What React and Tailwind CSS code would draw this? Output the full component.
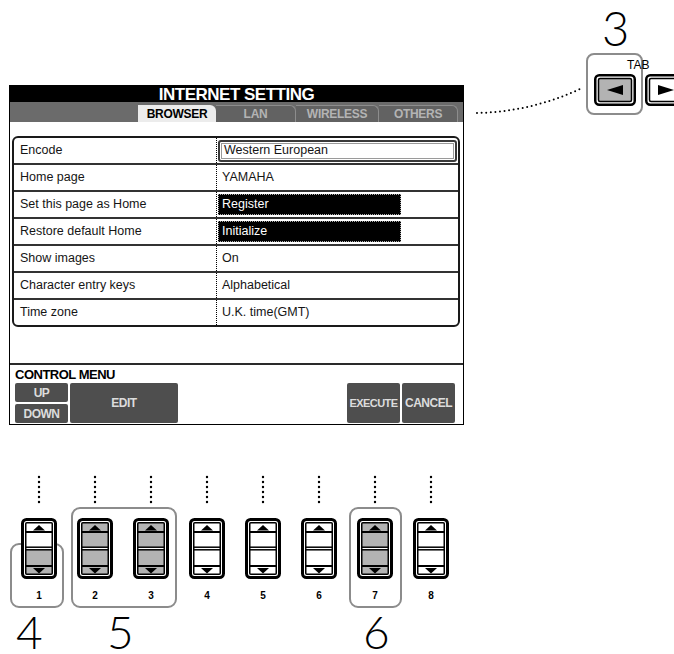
import React from 'react';

const rows = [
  { label: 'Encode', value: 'Western European', kind: 'field' },
  { label: 'Home page', value: 'YAMAHA' },
  { label: 'Set this page as Home', value: 'Register', kind: 'button' },
  { label: 'Restore default Home', value: 'Initialize', kind: 'button' },
  { label: 'Show images', value: 'On' },
  { label: 'Character entry keys', value: 'Alphabetical' },
  { label: 'Time zone', value: 'U.K. time(GMT)' },
];

const tabs = [
  { name: 'BROWSER', w: 'w-[78px]', active: true },
  { name: 'LAN', w: 'w-[80px]' },
  { name: 'WIRELESS', w: 'w-[83px]' },
  { name: 'OTHERS', w: 'w-[79px]' },
];

// 'none' = all white, 'lower' = lower half grey, 'all' = fully grey
const sliders = ['lower', 'all', 'all', 'none', 'none', 'none', 'all', 'none'];

const Slider = ({ fill }) => {
  const g = '#b3b3b3';
  const upper = fill === 'all' ? g : '#fff';
  const lower = fill === 'none' ? '#fff' : g;
  return (
    <svg width="36" height="61" viewBox="0 0 36 61">
      <rect x="1.5" y="1.5" width="33" height="58" rx="4" fill="#fff" stroke="#000" strokeWidth="3" />
      <rect x="5" y="5" width="26" height="9" fill={upper} />
      <rect x="5" y="14" width="26" height="15.5" fill={upper} />
      <rect x="5" y="31" width="26" height="17" fill={lower} />
      <rect x="5" y="48" width="26" height="8.5" fill={lower} />
      <rect x="4.75" y="4.75" width="26.5" height="51.5" rx="1" fill="none" stroke="#000" strokeWidth="1.5" />
      <line x1="4" x2="32" y1="14" y2="14" stroke="#000" strokeWidth="2" />
      <line x1="4" x2="32" y1="29.2" y2="29.2" stroke="#000" strokeWidth="1.5" />
      <line x1="4" x2="32" y1="31.8" y2="31.8" stroke="#000" strokeWidth="1.5" />
      <line x1="4" x2="32" y1="48" y2="48" stroke="#000" strokeWidth="2" />
      <polygon points="18,7 12,12.5 24,12.5" fill="#000" />
      <polygon points="12,50 24,50 18,55.5" fill="#000" />
    </svg>
  );
};

const TabButton = ({ dir }) => (
  <svg width="42" height="32" viewBox="0 0 42 32">
    <rect x="1.25" y="1.25" width="39.5" height="29.5" rx="4" fill="#fff" stroke="#000" strokeWidth="2.5" />
    <rect x="4.5" y="4.5" width="33" height="23" rx="1.5" fill={dir === 'left' ? '#b3b3b3' : '#fff'} stroke="#000" strokeWidth="1.5" />
    {dir === 'left' ? (
      <polygon points="13,16 29,11 29,21" fill="#000" />
    ) : (
      <polygon points="29,16 13,11 13,21" fill="#000" />
    )}
  </svg>
);

const Dots = () => (
  <svg width="6" height="34" viewBox="0 0 6 34">
    <line x1="3" x2="3" y1="2" y2="32" stroke="#000" strokeWidth="2.4" strokeLinecap="round" strokeDasharray="0 5" />
  </svg>
);

const Screen = () => (
  <div className="w-[455px] h-[340px] border border-black bg-white flex flex-col text-[#151515]">
    <div className="h-[16px] bg-black flex items-center justify-center text-white font-bold text-[17px] leading-none tracking-[-0.5px]">
      INTERNET SETTING
    </div>
    <div className="h-[20px] bg-[#6b6b6b] flex items-end justify-end pr-[5px]">
      {tabs.map((t) => (
        <div
          key={t.name}
          className={
            t.active
              ? `${t.w} h-[17px] bg-[#ececec] text-black rounded-tr-[6px] flex items-center justify-center font-bold text-[12px] tracking-[-0.3px] leading-none`
              : `${t.w} h-[17px] bg-[#626262] text-[#b4b4b4] border-t border-r border-[#8d8d8d] rounded-tr-[6px] flex items-center justify-center font-bold text-[12px] tracking-[-0.3px] leading-none`
          }
        >
          {t.name}
        </div>
      ))}
    </div>

    <div className="ml-[2px] mr-[3px] mt-[14px] border-2 border-[#1a1a1a] rounded-[6px] overflow-hidden">
      {rows.map((r, i) => (
        <div
          key={r.label}
          className={i < rows.length - 1 ? 'h-[27px] flex border-b-2 border-[#333]' : 'h-[25px] flex'}
        >
          <div className="w-[202px] pl-[6px] flex items-center text-[12.5px]">{r.label}</div>
          <div className="flex-1 border-l border-dotted border-black flex items-center text-[12.5px]">
            {r.kind === 'field' && (
              <div className="mx-[1px] w-full h-[22px] border-2 border-[#3a3a3a] rounded-[3px] shadow-[inset_0_0_0_1px_#fff,inset_0_0_0_2px_#9a9a9a] flex items-center pl-[4px]">
                {r.value}
              </div>
            )}
            {r.kind === 'button' && (
              <div className="ml-[1px] w-[183px] h-[21px] bg-black text-white border border-dotted border-[#aaa] flex items-center pl-[3px]">
                {r.value}
              </div>
            )}
            {!r.kind && <span className="pl-[5px]">{r.value}</span>}
          </div>
        </div>
      ))}
    </div>

    <div className="flex-1" />

    <div className="h-[61px] border-t-2 border-[#2a2a2a] pl-[5px] pr-[8px] flex flex-col">
      <div className="h-[18px] flex items-center font-bold text-[13px] leading-none tracking-[-0.5px] text-black">
        CONTROL MENU
      </div>
      <div className="flex h-[40px] text-[#dcdcdc] font-bold text-[12px] leading-none tracking-[-0.5px]">
        <div className="w-[53px] flex flex-col gap-[2px]">
          <div className="h-[19px] bg-[#4e4e4e] rounded-[2px] flex items-center justify-center">UP</div>
          <div className="h-[19px] bg-[#4e4e4e] rounded-[2px] flex items-center justify-center">DOWN</div>
        </div>
        <div className="ml-[2px] w-[108px] bg-[#4e4e4e] rounded-[2px] flex items-center justify-center">EDIT</div>
        <div className="flex-1" />
        <div className="w-[53px] bg-[#4e4e4e] rounded-[2px] flex items-center justify-center text-[11px] tracking-[-0.6px]">EXECUTE</div>
        <div className="ml-[2px] w-[53px] bg-[#4e4e4e] rounded-[2px] flex items-center justify-center">CANCEL</div>
      </div>
    </div>
  </div>
);

export default function App() {
  return (
    <div className="relative w-[674px] h-[654px] overflow-hidden bg-white font-['Liberation_Sans',sans-serif]">
      <div className="pt-[85px] pl-[9px]">
        <Screen />
      </div>

      {/* TAB callout */}
      <div className="absolute left-[586px] top-[53px] w-[57px] h-[62px] border-[2.5px] border-[#8c8c8c] rounded-[8px]" />
      <div className="absolute left-[594px] top-[74px]">
        <TabButton dir="left" />
      </div>
      <div className="absolute left-[645px] top-[74px]">
        <TabButton dir="right" />
      </div>
      <div className="absolute left-[627px] top-[59px] text-[12px] leading-none text-black">TAB</div>
      <div className="absolute left-[602px] top-[5px] text-[47px] leading-none font-light font-['Lato','Liberation_Sans',sans-serif] text-black">
        3
      </div>
      <svg className="absolute left-[470px] top-[80px]" width="115" height="40" viewBox="0 0 115 40">
        <path d="M7 33 Q60 32 110 9" fill="none" stroke="#000" strokeWidth="2" strokeLinecap="round" strokeDasharray="0 4.6" />
      </svg>

      {/* highlight frames */}
      <div className="absolute left-[10px] top-[543px] w-[54px] h-[65px] border-[2.5px] border-[#8c8c8c] rounded-[9px]" />
      <div className="absolute left-[71px] top-[507px] w-[106px] h-[101px] border-[2.5px] border-[#8c8c8c] rounded-[9px]" />
      <div className="absolute left-[349px] top-[507px] w-[53px] h-[101px] border-[2.5px] border-[#8c8c8c] rounded-[9px]" />

      <div className="relative mt-[50px] pl-[11px] flex">
        {sliders.map((f, i) => (
          <div key={i} className="w-[56px] flex flex-col items-center">
            <Dots />
            <div className="mt-[9px]">
              <Slider fill={f} />
            </div>
            <div className="mt-[11px] text-[10px] font-bold leading-[12px]">{i + 1}</div>
          </div>
        ))}
      </div>

      <div className="absolute left-[16px] top-[612px] text-[46px] leading-[40px] font-light font-['Lato','Liberation_Sans',sans-serif]">4</div>
      <div className="absolute left-[107px] top-[612px] text-[46px] leading-[40px] font-light font-['Lato','Liberation_Sans',sans-serif]">5</div>
      <div className="absolute left-[363px] top-[612px] text-[46px] leading-[40px] font-light font-['Lato','Liberation_Sans',sans-serif]">6</div>
    </div>
  );
}
